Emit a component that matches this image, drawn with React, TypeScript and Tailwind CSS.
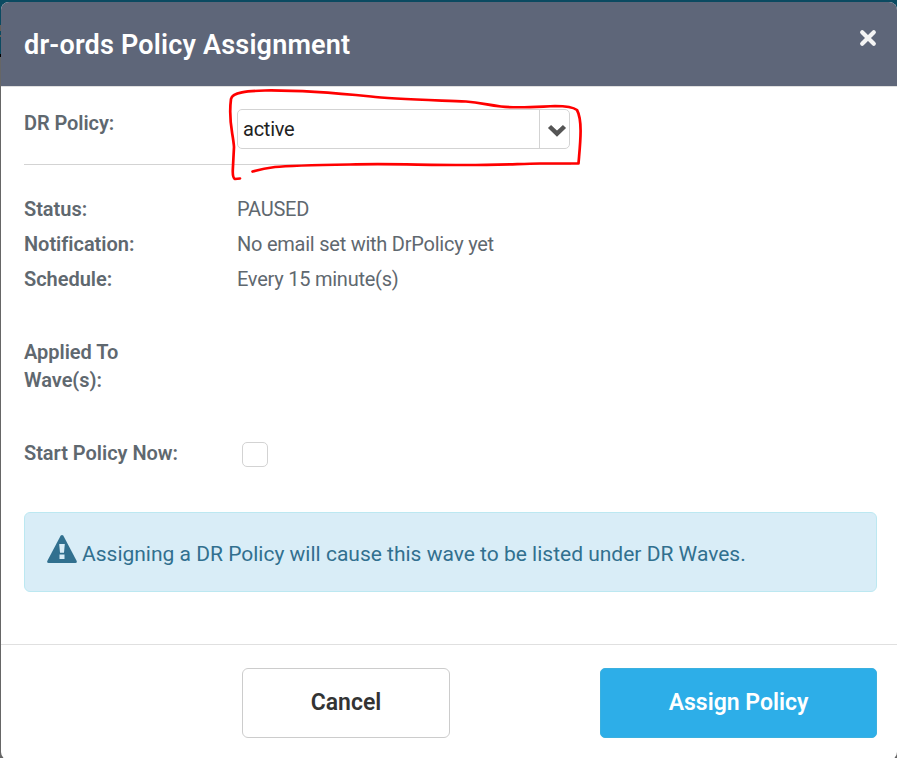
import type { ReactNode } from 'react';

function Row({ label, children, className = '' }: { label: ReactNode; children?: ReactNode; className?: string }) {
  return (
    <div className={`flex ${className}`}>
      <div className="w-[213px] shrink-0 font-semibold tracking-[-0.03px]">{label}</div>
      <div className="tracking-[-0.24px]">{children}</div>
    </div>
  );
}

function PolicySelect() {
  return (
    <button
      type="button"
      className="flex h-10 w-[333px] overflow-hidden rounded-[5px] border border-[#d3d3d3] bg-white text-left text-[20px] leading-[38px] tracking-[-0.24px] text-[#222]"
    >
      <span className="flex-1 pl-[5px]">active</span>
      <span className="flex w-[30px] items-center justify-center border-l border-[#d3d3d3] pl-[5px] pt-[3px]">
        <svg className="shrink-0" width="20" height="14" viewBox="0 0 20 14" fill="none">
          <path d="M2.500 2.500 L10 9.700 L17.500 2.500" stroke="#555" strokeWidth="4.500" />
        </svg>
      </span>
    </button>
  );
}

function RedMarker() {
  return (
    <svg
      className="pointer-events-none absolute left-0 top-0"
      width="897"
      height="200"
      viewBox="0 0 897 200"
      fill="none"
      stroke="#ff0000"
      strokeWidth="2.7"
      strokeLinecap="round"
      strokeLinejoin="round"
    >
      <path d="M240 178.500 L235 179 Q232.500 178 232.800 170 L234 147 C233 132 228 122 231 99 C232 92 248 91 265 90.500 C300 90 340 93.500 371 96.500 C390 99 430 100 466 101.500 C482 103 487 105 501 106.500 C519 108.500 540 106.500 555 106 C565 106 573 107 577 110 C583 121 580 145 578.500 163.500 L540 163.500 C515 164 500 165 465 165 C420 165 390 163.500 350 164.500 C320 165 290 165.500 275 167 C268 168 260 169.500 252.500 171.500" />
    </svg>
  );
}

export default function App() {
  return (
    <div className="relative h-[758px] w-[897px] overflow-hidden bg-[linear-gradient(#0b4a61_0px,#0b4a61_25px,#665f59_25px,#665f59_31px,#0b4a61_31px,#0b4a61_35px,#665f59_35px,#665f59_37px,#0b4a61_37px,#0b4a61_54px,#000_54px,#000_57px,#666_57px)] pl-px pt-[2px] font-['Roboto',sans-serif] text-[20px] leading-7 text-[#5f686f]">
      <div className="flex h-[758px] flex-col overflow-hidden rounded-[8px] bg-white">
        <header className="flex h-[85px] shrink-0 items-center justify-between border-b border-[#e0e0e0] bg-[#5e6679] pl-[23px] pr-[20px]">
          <h1 className="pt-[2px] text-[27px] font-semibold leading-9 tracking-[0.2px] text-white">dr-ords Policy Assignment</h1>
          <button type="button" aria-label="Close" className="mb-[12px]">
            <svg width="18" height="18" viewBox="0 0 18 18">
              <path d="M3.200 3.200 L14.800 14.800 M14.800 3.200 L3.200 14.800" stroke="#f4f4f4" strokeWidth="4.200" strokeLinecap="round" />
            </svg>
          </button>
        </header>

        <main className="h-[557px] shrink-0 px-[23px] pr-[20px] pt-[22px]">
          <div className="flex h-[56px] w-[547px] border-b border-[#d3d3d3]">
            <div className="w-[213px] font-semibold tracking-[-0.08px]">DR Policy:</div>
            <PolicySelect />
          </div>
          <div className="mt-[30px] flex flex-col gap-[7px]">
            <Row label="Status:">PAUSED</Row>
            <Row label="Notification:">No email set with DrPolicy yet</Row>
            <Row label="Schedule:">Every 15 minute(s)</Row>
          </div>
          <Row className="mt-[45px]" label={<>Applied To<br />Wave(s):</>} />
          <Row className="mt-[45px]" label="Start Policy Now:">
            <span className="ml-[5px] mt-[3px] block h-[25px] w-[26px] rounded-[5px] border border-[#d3d3d3]" />
          </Row>
          <div className="mt-[45px] flex h-[80px] items-center rounded-[6px] border border-[#bce8f1] bg-[#d9edf7] pl-[22px] text-[21px] text-[#31708f]">
            <svg className="mb-[6px] mr-[5px]" width="30" height="28" viewBox="0 0 30 28">
              <path d="M13.600 .8 Q15 -.8 16.400 .8 L29.700 26 Q30.200 28 28.500 28 H1.500 Q-.2 28 .3 26 Z" fill="#31708f" />
              <path d="M12.200 9 H17.800 L17 17.800 H13 Z M12.500 19.500 H17.500 V24 H12.500 Z" fill="#d9edf7" />
            </svg>
            <span className="pt-[4px]">Assigning a DR Policy will cause this wave to be listed under DR Waves.</span>
          </div>
        </main>

        <footer className="flex h-[115px] shrink-0 items-start justify-between border-t border-[#e0e0e0] pl-[241px] pr-[20px] pt-[23px] text-[23px] font-semibold">
          <button type="button" className="h-[70px] w-[208px] rounded-[6px] border border-[#ccc] bg-white text-[#333]">
            Cancel
          </button>
          <button type="button" className="h-[70px] w-[277px] rounded-[5px] border border-[#3bb0df] bg-[#2daee8] text-white">
            Assign Policy
          </button>
        </footer>
      </div>
      <RedMarker />
    </div>
  );
}
